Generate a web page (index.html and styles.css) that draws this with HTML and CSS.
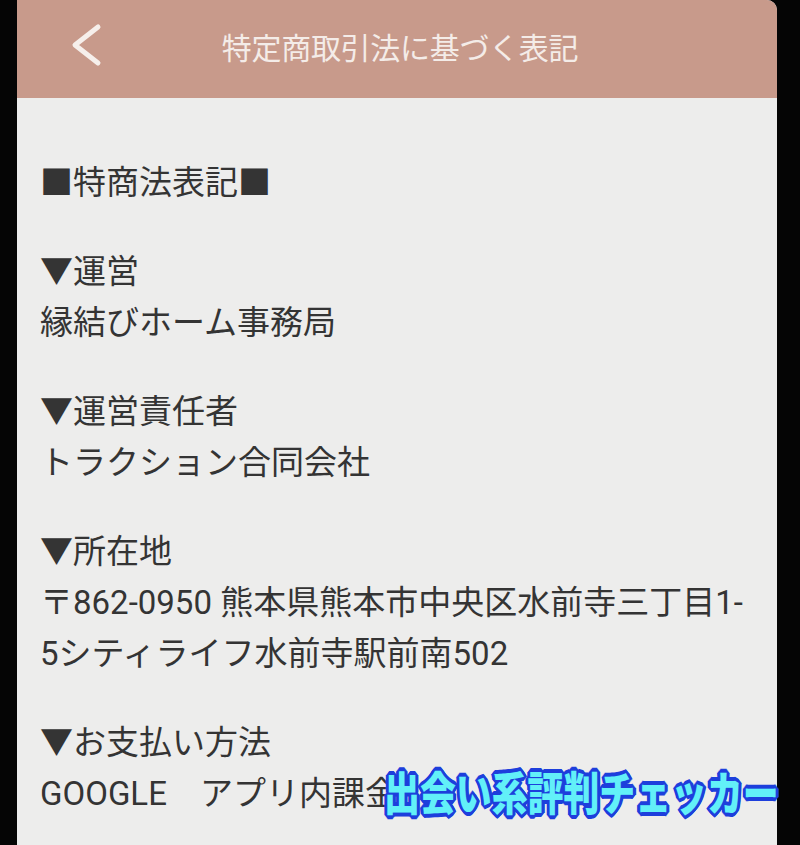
FILE: index.html
```html
<!DOCTYPE html>
<html lang="ja">
<head>
<meta charset="utf-8">
<title>特定商取引法に基づく表記</title>
<link rel="stylesheet" href="styles.css">
</head>
<body>
<div class="screen">
  <header class="topbar">
    <svg class="back" width="40" height="50" viewBox="0 0 40 50" aria-hidden="true">
      <polyline points="29,8 6,26 29,44" fill="none" stroke="#f6efeb" stroke-width="5" stroke-linecap="round" stroke-linejoin="round"/>
    </svg>
    <h1 class="title">特定商取引法に基づく表記</h1>
  </header>
  <main class="content">
    <p class="block">■特商法表記■</p>
    <p class="block">▼運営<br>縁結びホーム事務局</p>
    <p class="block">▼運営責任者<br>トラクション合同会社</p>
    <p class="block">▼所在地<br>〒862-0950 熊本県熊本市中央区水前寺三丁目1-<br>5シティライフ水前寺駅前南502</p>
    <p class="block">▼お支払い方法<br>GOOGLE　アプリ内課金</p>
  </main>
</div>
<div class="watermark">出会い系評判チェッカー</div>
</body>
</html>
```

FILE: styles.css
```css
html, body {
  margin: 0;
  padding: 0;
  background: #050505;
  height: 845px;
  overflow: hidden;
}
body {
  font-family: "Noto Sans CJK JP", "Noto Sans", sans-serif;
  position: relative;
}
.screen {
  margin-left: 17px;
  width: 760px;
  height: 845px;
  background: #ededec;
  border-top-right-radius: 10px;
  overflow: hidden;
}
.topbar {
  height: 98px;
  background: #c89a8b;
  position: relative;
  display: flex;
  align-items: center;
  justify-content: center;
}
.back {
  position: absolute;
  left: 52px;
  top: 19px;
}
.title {
  margin: 0 0 6px 6px;
  font-size: 30px;
  font-weight: 400;
  color: #f4ece8;
  letter-spacing: -0.3px;
}
.content {
  padding: 59px 0 0 23px;
  color: #343434;
  font-family: Roboto, "Noto Sans CJK JP", sans-serif;
  font-size: 33px;
  line-height: 51px;
}
.block {
  margin: 0 0 38px 0;
  white-space: nowrap;
}
.watermark {
  position: absolute;
  left: 384px;
  top: 760px;
  font-family: "Noto Sans CJK JP", sans-serif;
  font-weight: 900;
  font-size: 46px;
  line-height: 60px;
  color: #62f0f8;
  white-space: nowrap;
  transform: scaleX(0.78);
  transform-origin: left center;
  text-shadow:
    3px 0 0 #1d3fdc, -3px 0 0 #1d3fdc, 0 3px 0 #1d3fdc, 0 -3px 0 #1d3fdc,
    2px 2px 0 #1d3fdc, -2px -2px 0 #1d3fdc, 2px -2px 0 #1d3fdc, -2px 2px 0 #1d3fdc,
    3px 1px 0 #1d3fdc, -3px 1px 0 #1d3fdc, 3px -1px 0 #1d3fdc, -3px -1px 0 #1d3fdc,
    1px 3px 0 #1d3fdc, -1px 3px 0 #1d3fdc, 1px -3px 0 #1d3fdc, -1px -3px 0 #1d3fdc,
    4px 0 0 #1d3fdc, -4px 0 0 #1d3fdc, 0 4px 0 #1d3fdc, 0 -4px 0 #1d3fdc;
}
```
